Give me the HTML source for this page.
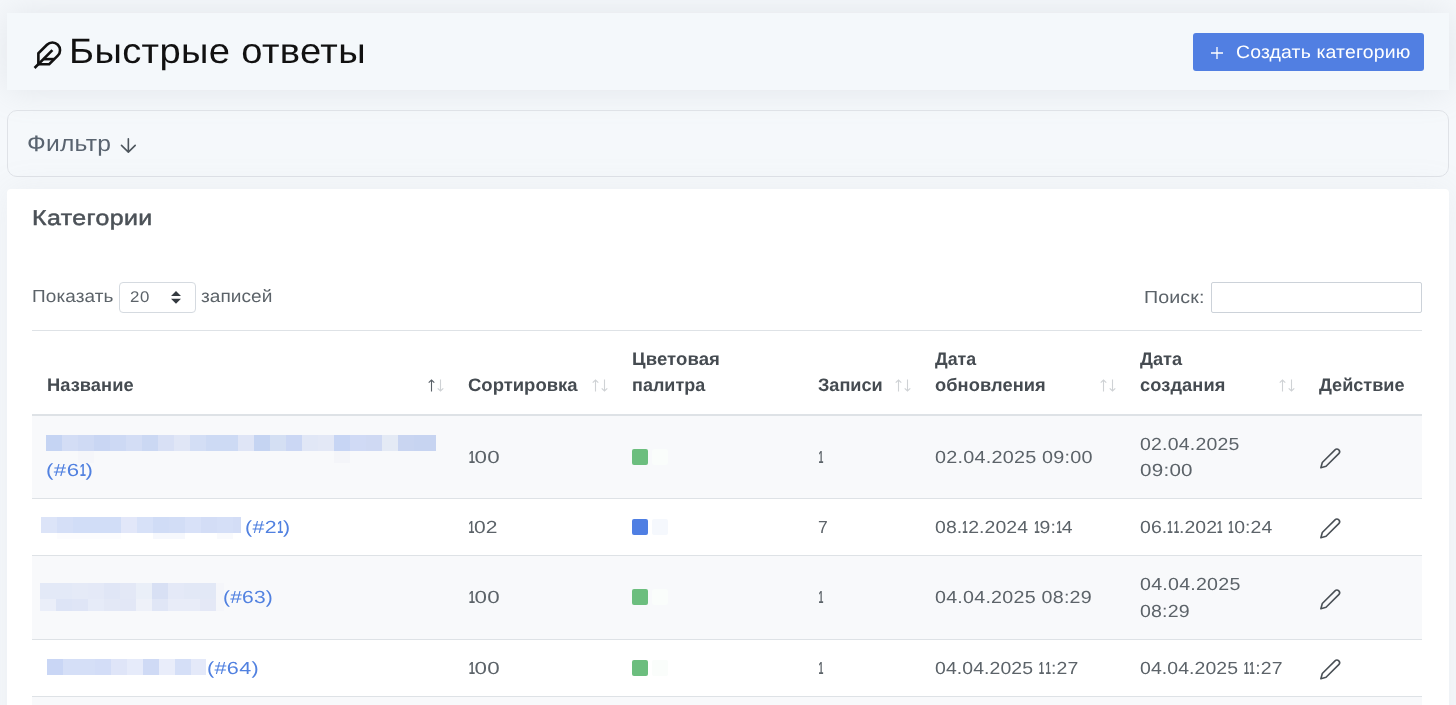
<!DOCTYPE html>
<html lang="ru">
<head>
<meta charset="utf-8">
<title>Быстрые ответы</title>
<style>
*{box-sizing:border-box}
html,body{margin:0;padding:0}
body{-webkit-font-smoothing:antialiased;text-rendering:geometricPrecision;width:1456px;height:705px;overflow:hidden;background:#f5f8fb;font-family:"Liberation Sans",sans-serif;color:#5c6369;position:relative}
.hdr{will-change:transform;position:absolute;left:7px;top:13px;width:1442px;height:77px;background:#f4f8fb;box-shadow:0 0 35px 0 rgba(154,161,171,.2)}
.hdr h1{position:absolute;left:62.1px;top:14px;margin:0;font-weight:400;font-size:35.2px;line-height:50px;color:#111;white-space:nowrap}
.hdr svg.fe{position:absolute;left:24.9px;top:27.2px;width:30.6px;height:30.6px}
.btn{position:absolute;left:1186px;top:20px;width:231px;height:38px;background:#517fe2;border-radius:3px;color:#fff;font-size:18px;line-height:38px;white-space:nowrap}
.btn svg{position:absolute;left:17px;top:13px;width:14px;height:14px}
.btn span{position:absolute;left:43px;top:.4px}
.flt{position:absolute;left:7px;top:110px;width:1442px;height:67px;background:transparent;border:1px solid #dfe2e7;border-radius:10px}
.flt span{position:absolute;left:19px;top:17.5px;font-size:22.5px;line-height:30px;color:#5a6470;white-space:nowrap}
.flt svg{position:absolute;left:107.2px;top:22.1px;width:24px;height:24px}
.card{will-change:transform;position:absolute;left:7px;top:189px;width:1442px;height:560px;background:#fff;border-radius:4px;box-shadow:0 0 35px 0 rgba(154,161,171,.1)}
.card h4{position:absolute;left:25px;top:14px;margin:0;font-size:21.4px;line-height:30px;font-weight:400;-webkit-text-stroke:.5px #4b5157;color:#4b5157;white-space:nowrap}
.len{position:absolute;left:25px;top:92px;height:30px;font-size:17.5px;line-height:30px;white-space:nowrap}
.len .a{position:absolute;left:0;top:0}
.len .sel{position:absolute;left:87px;top:1px;width:77px;height:31px;border:1px solid #d5dae0;border-radius:4px;background:#fff}
.len .sel b{position:absolute;left:10px;top:0;font-weight:400;font-size:15.4px}
.len .sel svg{position:absolute;left:51px;top:8px;width:10px;height:12.8px}
.len .c{position:absolute;left:169px;top:0}
.srch{position:absolute;left:1137px;top:92.5px;font-size:17.5px;line-height:30px;white-space:nowrap}
.inp{position:absolute;left:1204px;top:93px;width:211px;height:31px;border:1px solid #ccd2d9;border-radius:2px;background:#fff}
table{position:absolute;left:25px;top:141px;width:1390px;border-collapse:separate;border-spacing:0;table-layout:fixed;font-size:17.5px;line-height:26.25px}
th,td{padding:0 15px;text-align:left;vertical-align:middle;overflow:hidden;white-space:nowrap}
thead th{height:86px;border-top:1px solid #dee2e6;border-bottom:2px solid #dee2e6;vertical-align:bottom;padding-bottom:16px;font-weight:700;font-size:18px;color:#454b51;position:relative}
tbody td{border-bottom:1px solid #dee2e6}
tbody tr.o td{background:#f8f9fb}
th svg{position:absolute;right:7.8px;bottom:22.4px;width:17px;height:13px}
td a{color:#5181e0;text-decoration:none}
.sw{display:inline-block;width:16px;height:16px;border-radius:2px;vertical-align:middle;margin-right:4px;position:relative;top:-1.7px}
#px i{position:absolute;display:block}
td svg{width:22.6px;height:22.6px;display:block;margin-left:0;position:relative;top:1.3px}
td i{font-style:normal;font-weight:700;display:inline-block;transform:scaleX(.5)}
td i.s1{margin-left:-2px}
.kc2{margin:0 -2.25px}
.kc4{margin:0 -2.11px}
.kd2{margin:0 -2.31px}
.kd4{margin:0 -2.29px}
.ka1{margin:0 -2.70px}
.ka2{margin:0 -2.70px}
.kb1{margin:0 -2.70px 0 -2.40px}
.kb2{margin:0 -2.70px 0 -2.40px}
.kb3{margin:0 -2.70px 0 -2.40px}
.kb4{margin:0 -2.70px 0 -2.40px}
</style>
</head>
<body>
<div class="hdr">
<svg class="fe" viewBox="0 0 24 24" fill="none" stroke="#111" stroke-width="2.05" stroke-linecap="butt" stroke-linejoin="miter"><path d="M20.24 12.24a6 6 0 0 0-8.49-8.49L5 10.5V19h8.5z"/><line x1="16" y1="8" x2="2" y2="22"/><line x1="17.5" y1="15" x2="9" y2="15"/></svg>
<h1><span id="t1" style="letter-spacing:0.33px;display:inline-block;transform-origin:0 50%;transform:scaleX(1.084)">Быстрые ответы</span></h1>
<div class="btn"><svg viewBox="0 0 14 14" stroke="#fff" stroke-width="1.3" fill="none"><path d="M7 1v12M1 7h12"/></svg><span id="t2" style="letter-spacing:0.14px;display:inline-block;transform-origin:0 50%;transform:scaleX(1.080)">Создать категорию</span></div>
</div>
<div class="flt"><span id="t3" style="letter-spacing:0.21px;display:inline-block;transform-origin:0 50%;transform:scaleX(1.095)">Фильтр</span>
<svg viewBox="0 0 24 24" fill="none" stroke="#4d555d" stroke-width="1.6" stroke-linecap="round" stroke-linejoin="round"><path d="M13.35 5.7v13.4M6.5 12.4l6.85 6.7 6.85-6.7"/></svg>
</div>
<div class="card">
<h4><span id="t4" style="letter-spacing:0.36px;display:inline-block;transform-origin:0 50%;transform:scaleX(1.164)">Категории</span></h4>
<div class="len"><span class="a" id="t5" style="letter-spacing:0.11px;display:inline-block;transform-origin:0 50%;transform:scaleX(1.084)">Показать</span><span class="sel"><b id="t6" style="letter-spacing:0.55px;display:inline-block;transform-origin:0 50%;transform:scaleX(1.095)">20</b><svg viewBox="0 0 10 12.8"><path d="M5 0l5 5H0zM5 12.8l-5-5h10z" fill="#343a40"/></svg></span><span class="c" id="t7" style="letter-spacing:0.03px;display:inline-block;transform-origin:0 50%;transform:scaleX(1.090)">записей</span></div>
<div class="srch"><span id="t8" style="letter-spacing:0.10px;display:inline-block;transform-origin:0 50%;transform:scaleX(1.123)">Поиск:</span></div><div class="inp"></div>
<table>
<colgroup><col style="width:421px"><col style="width:164px"><col style="width:186px"><col style="width:117px"><col style="width:205px"><col style="width:179px"><col style="width:118px"></colgroup>
<thead><tr>
<th><span id="h1" style="letter-spacing:0.04px;display:inline-block;transform-origin:0 50%;transform:scaleX(1.016)">Название</span><svg viewBox="0 0 17 14" preserveAspectRatio="none" fill="none" stroke-width="1.1"><path stroke="#596067" d="M3.5 13.5V1.2M.7 4l2.8-2.9L6.3 4"/><path stroke="#cfd2d5" d="M12.5 .5v12.3M9.7 10l2.8 2.9 2.8-2.9"/></svg></th>
<th><span id="h2" style="letter-spacing:0.01px;display:inline-block;transform-origin:0 50%;transform:scaleX(1.026)">Сортировка</span><svg viewBox="0 0 17 14" preserveAspectRatio="none" fill="none" stroke-width="1.1" stroke="#cfd2d5"><path d="M3.5 13.5V1.2M.7 4l2.8-2.9L6.3 4"/><path d="M12.5 .5v12.3M9.7 10l2.8 2.9 2.8-2.9"/></svg></th>
<th><span id="h3a" style="letter-spacing:0.09px;display:inline-block;transform-origin:0 50%;transform:scaleX(1.030)">Цветовая</span><br><span id="h3b" style="letter-spacing:0.04px;display:inline-block;transform-origin:0 50%;transform:scaleX(0.997)">палитра</span></th>
<th><span id="h4" style="letter-spacing:-0.04px;display:inline-block;transform-origin:0 50%;transform:scaleX(1.009)">Записи</span><svg viewBox="0 0 17 14" preserveAspectRatio="none" fill="none" stroke-width="1.1" stroke="#cfd2d5"><path d="M3.5 13.5V1.2M.7 4l2.8-2.9L6.3 4"/><path d="M12.5 .5v12.3M9.7 10l2.8 2.9 2.8-2.9"/></svg></th>
<th><span id="h5a" style="letter-spacing:-0.00px;display:inline-block;transform-origin:0 50%;transform:scaleX(0.988)">Дата</span><br><span id="h5b" style="letter-spacing:0.07px;display:inline-block;transform-origin:0 50%;transform:scaleX(1.015)">обновления</span><svg viewBox="0 0 17 14" preserveAspectRatio="none" fill="none" stroke-width="1.1" stroke="#cfd2d5"><path d="M3.5 13.5V1.2M.7 4l2.8-2.9L6.3 4"/><path d="M12.5 .5v12.3M9.7 10l2.8 2.9 2.8-2.9"/></svg></th>
<th><span id="h6a" style="letter-spacing:-0.00px;display:inline-block;transform-origin:0 50%;transform:scaleX(1.010)">Дата</span><br><span id="h6b" style="letter-spacing:0.12px;display:inline-block;transform-origin:0 50%;transform:scaleX(1.012)">создания</span><svg viewBox="0 0 17 14" preserveAspectRatio="none" fill="none" stroke-width="1.1" stroke="#cfd2d5"><path d="M3.5 13.5V1.2M.7 4l2.8-2.9L6.3 4"/><path d="M12.5 .5v12.3M9.7 10l2.8 2.9 2.8-2.9"/></svg></th>
<th><span id="h7" style="letter-spacing:-0.02px;display:inline-block;transform-origin:0 50%;transform:scaleX(1.007)">Действие</span></th>
</tr></thead>
<tbody>
<tr class="o" style="height:83px"><td><br><a id="a1" style="letter-spacing:0.36px;display:inline-block;transform-origin:0 50%;transform:scaleX(1.268);margin-left:-1px">(#6<i class="ka1">1</i>)</a></td><td><span id="b1" style="letter-spacing:0.39px;display:inline-block;transform-origin:0 50%;transform:scaleX(1.277)"><i class="kb1">1</i>00</span></td><td><span class="sw" style="background:#6cbe7e"></span><span class="sw" style="background:#fafdfb"></span></td><td><i class="s1">1</i></td><td><span id="c1" style="letter-spacing:0.19px;display:inline-block;transform-origin:0 50%;transform:scaleX(1.133)">02.04.2025 09:00</span></td><td><span id="d1a" style="letter-spacing:0.20px;display:inline-block;transform-origin:0 50%;transform:scaleX(1.112)">02.04.2025</span><br><span id="d1b" style="letter-spacing:0.21px;display:inline-block;transform-origin:0 50%;transform:scaleX(1.178)">09:00</span></td><td><svg viewBox="0 0 24 24" fill="none" stroke="#4a5056" stroke-width="1.7" stroke-linecap="round" stroke-linejoin="round"><path d="M17 3a2.828 2.828 0 1 1 4 4L7.5 20.5 2 22l1.5-5.5L17 3z"/></svg></td></tr>
<tr style="height:57px"><td><a id="a2" style="letter-spacing:0.37px;display:inline-block;transform-origin:0 50%;transform:scaleX(1.217);margin-left:198px">(#2<i class="ka2">1</i>)</a></td><td><span id="b2" style="letter-spacing:0.25px;display:inline-block;transform-origin:0 50%;transform:scaleX(1.200)"><i class="kb2">1</i>02</span></td><td><span class="sw" style="background:#4f7fe3"></span><span class="sw" style="background:#f5f8fd"></span></td><td>7</td><td><span id="c2" style="letter-spacing:0.08px;display:inline-block;transform-origin:0 50%;transform:scaleX(1.110)">08.<i class="kc2">1</i>2.2024 <i class="kc2">1</i>9:<i class="kc2">1</i>4</span></td><td><span id="d2" style="letter-spacing:0.08px;display:inline-block;transform-origin:0 50%;transform:scaleX(1.110)">06.<i class="kd2">1</i><i class="kd2">1</i>.202<i class="kd2">1</i> <i class="kd2">1</i>0:24</span></td><td><svg viewBox="0 0 24 24" fill="none" stroke="#4a5056" stroke-width="1.7" stroke-linecap="round" stroke-linejoin="round"><path d="M17 3a2.828 2.828 0 1 1 4 4L7.5 20.5 2 22l1.5-5.5L17 3z"/></svg></td></tr>
<tr class="o" style="height:84px"><td><a id="a3" style="letter-spacing:0.16px;display:inline-block;transform-origin:0 50%;transform:scaleX(1.201);margin-left:175.5px">(#63)</a></td><td><span id="b3" style="letter-spacing:0.39px;display:inline-block;transform-origin:0 50%;transform:scaleX(1.277)"><i class="kb3">1</i>00</span></td><td><span class="sw" style="background:#6cbe7e"></span><span class="sw" style="background:#fafdfb"></span></td><td><i class="s1">1</i></td><td><span id="c3" style="letter-spacing:0.22px;display:inline-block;transform-origin:0 50%;transform:scaleX(1.123)">04.04.2025 08:29</span></td><td><span id="d3a" style="letter-spacing:0.22px;display:inline-block;transform-origin:0 50%;transform:scaleX(1.120)">04.04.2025</span><br><span id="d3b" style="letter-spacing:0.14px;display:inline-block;transform-origin:0 50%;transform:scaleX(1.117)">08:29</span></td><td><svg viewBox="0 0 24 24" fill="none" stroke="#4a5056" stroke-width="1.7" stroke-linecap="round" stroke-linejoin="round"><path d="M17 3a2.828 2.828 0 1 1 4 4L7.5 20.5 2 22l1.5-5.5L17 3z"/></svg></td></tr>
<tr style="height:57px"><td><a id="a4" style="letter-spacing:0.28px;display:inline-block;transform-origin:0 50%;transform:scaleX(1.231);margin-left:160px">(#64)</a></td><td><span id="b4" style="letter-spacing:0.39px;display:inline-block;transform-origin:0 50%;transform:scaleX(1.277)"><i class="kb4">1</i>00</span></td><td><span class="sw" style="background:#6cbe7e"></span><span class="sw" style="background:#fafdfb"></span></td><td><i class="s1">1</i></td><td><span id="c4" style="letter-spacing:0.08px;display:inline-block;transform-origin:0 50%;transform:scaleX(1.110)">04.04.2025 <i class="kc4">1</i><i class="kc4">1</i>:27</span></td><td><span id="d4" style="letter-spacing:0.08px;display:inline-block;transform-origin:0 50%;transform:scaleX(1.110)">04.04.2025 <i class="kd4">1</i><i class="kd4">1</i>:27</span></td><td><svg viewBox="0 0 24 24" fill="none" stroke="#4a5056" stroke-width="1.7" stroke-linecap="round" stroke-linejoin="round"><path d="M17 3a2.828 2.828 0 1 1 4 4L7.5 20.5 2 22l1.5-5.5L17 3z"/></svg></td></tr>
<tr class="o" style="height:57px"><td></td><td></td><td></td><td></td><td></td><td></td><td></td></tr>
</tbody>
</table>
</div>
<div id="px"><i style="left:46px;top:435px;width:16px;height:16px;background:#c5d4f3"></i><i style="left:62px;top:435px;width:16px;height:16px;background:#d3ddf5"></i><i style="left:78px;top:435px;width:16px;height:16px;background:#cfdaf4"></i><i style="left:94px;top:435px;width:16px;height:16px;background:#c9d6f3"></i><i style="left:110px;top:435px;width:16px;height:16px;background:#cdd9f4"></i><i style="left:126px;top:435px;width:16px;height:16px;background:#d3ddf5"></i><i style="left:142px;top:435px;width:16px;height:16px;background:#cbd8f3"></i><i style="left:158px;top:435px;width:16px;height:16px;background:#d8e0f5"></i><i style="left:174px;top:435px;width:16px;height:16px;background:#e0e6f6"></i><i style="left:190px;top:435px;width:16px;height:16px;background:#d3def5"></i><i style="left:206px;top:435px;width:16px;height:16px;background:#cddaf4"></i><i style="left:222px;top:435px;width:16px;height:16px;background:#cddaf4"></i><i style="left:238px;top:435px;width:16px;height:16px;background:#dfe5f6"></i><i style="left:254px;top:435px;width:16px;height:16px;background:#c5d4f2"></i><i style="left:270px;top:435px;width:16px;height:16px;background:#d4dff3"></i><i style="left:286px;top:435px;width:16px;height:16px;background:#cbd7f4"></i><i style="left:302px;top:435px;width:16px;height:16px;background:#e1e7f6"></i><i style="left:318px;top:435px;width:16px;height:16px;background:#e3e8f6"></i><i style="left:334px;top:435px;width:16px;height:16px;background:#c7d5f4"></i><i style="left:350px;top:435px;width:16px;height:16px;background:#d0daf5"></i><i style="left:366px;top:435px;width:16px;height:16px;background:#cfd9f3"></i><i style="left:382px;top:435px;width:16px;height:16px;background:#e4eaf5"></i><i style="left:398px;top:435px;width:16px;height:16px;background:#c9d5f1"></i><i style="left:414px;top:435px;width:16px;height:16px;background:#c7d4f1"></i><i style="left:430px;top:435px;width:6px;height:16px;background:#c7d4f1"></i><i style="left:41px;top:517px;width:16px;height:16px;background:#dce4f8"></i><i style="left:57px;top:517px;width:16px;height:16px;background:#d5dff7"></i><i style="left:73px;top:517px;width:16px;height:16px;background:#d1ddf7"></i><i style="left:89px;top:517px;width:16px;height:16px;background:#d1ddf7"></i><i style="left:105px;top:517px;width:16px;height:16px;background:#d1ddf7"></i><i style="left:121px;top:517px;width:16px;height:16px;background:#e2e7f9"></i><i style="left:137px;top:517px;width:16px;height:16px;background:#d7e1f8"></i><i style="left:153px;top:517px;width:16px;height:16px;background:#d0dcf6"></i><i style="left:169px;top:517px;width:16px;height:16px;background:#d2ddf6"></i><i style="left:185px;top:517px;width:16px;height:16px;background:#d8e1f8"></i><i style="left:201px;top:517px;width:16px;height:16px;background:#d3ddf6"></i><i style="left:217px;top:517px;width:16px;height:16px;background:#d5dff7"></i><i style="left:233px;top:517px;width:8px;height:16px;background:#d3ddf6"></i><i style="left:40px;top:583px;width:16px;height:16px;background:#e3e9f7"></i><i style="left:56px;top:583px;width:16px;height:16px;background:#e3e9f7"></i><i style="left:72px;top:583px;width:16px;height:16px;background:#e5eaf7"></i><i style="left:88px;top:583px;width:16px;height:16px;background:#e4e9f7"></i><i style="left:104px;top:583px;width:16px;height:16px;background:#e0e6f6"></i><i style="left:120px;top:583px;width:16px;height:16px;background:#e3e8f6"></i><i style="left:136px;top:583px;width:16px;height:16px;background:#eaeff8"></i><i style="left:152px;top:583px;width:16px;height:16px;background:#d8e0f4"></i><i style="left:168px;top:583px;width:16px;height:16px;background:#e4e9f7"></i><i style="left:184px;top:583px;width:16px;height:16px;background:#e2e8f6"></i><i style="left:200px;top:583px;width:16px;height:16px;background:#e2e8f6"></i><i style="left:40px;top:599px;width:16px;height:12px;background:#eaeef9"></i><i style="left:56px;top:599px;width:16px;height:12px;background:#dde4f6"></i><i style="left:72px;top:599px;width:16px;height:12px;background:#dfe5f6"></i><i style="left:88px;top:599px;width:16px;height:12px;background:#e6ebf8"></i><i style="left:104px;top:599px;width:16px;height:12px;background:#e3e8f6"></i><i style="left:120px;top:599px;width:16px;height:12px;background:#e2e7f6"></i><i style="left:136px;top:599px;width:16px;height:12px;background:#eef1f9"></i><i style="left:152px;top:599px;width:16px;height:12px;background:#e0e6f6"></i><i style="left:168px;top:599px;width:16px;height:12px;background:#e8ecf8"></i><i style="left:184px;top:599px;width:16px;height:12px;background:#e8ecf8"></i><i style="left:200px;top:599px;width:16px;height:12px;background:#e4e8f6"></i><i style="left:47px;top:659px;width:16px;height:16px;background:#c9d6f5"></i><i style="left:63px;top:659px;width:16px;height:16px;background:#d5dff7"></i><i style="left:79px;top:659px;width:16px;height:16px;background:#d5dff7"></i><i style="left:95px;top:659px;width:16px;height:16px;background:#d3ddf7"></i><i style="left:111px;top:659px;width:16px;height:16px;background:#dfe5f8"></i><i style="left:127px;top:659px;width:16px;height:16px;background:#e6ebfa"></i><i style="left:143px;top:659px;width:16px;height:16px;background:#cfdaf5"></i><i style="left:159px;top:659px;width:16px;height:16px;background:#e9edfa"></i><i style="left:175px;top:659px;width:16px;height:16px;background:#d5dff7"></i><i style="left:191px;top:659px;width:15px;height:16px;background:#e4e9f9"></i><i style="left:78px;top:451px;width:16px;height:12px;background:#f5f6fa"></i><i style="left:334px;top:451px;width:16px;height:12px;background:#f4f5f9"></i><i style="left:57px;top:533px;width:64px;height:6px;background:#fcfcfe"></i><i style="left:153px;top:533px;width:32px;height:6px;background:#f6f8fd"></i><i style="left:217px;top:533px;width:16px;height:6px;background:#f9fafd"></i><i style="left:216px;top:583px;width:8px;height:28px;background:#f5f6fa"></i></div>
</body>
</html>
